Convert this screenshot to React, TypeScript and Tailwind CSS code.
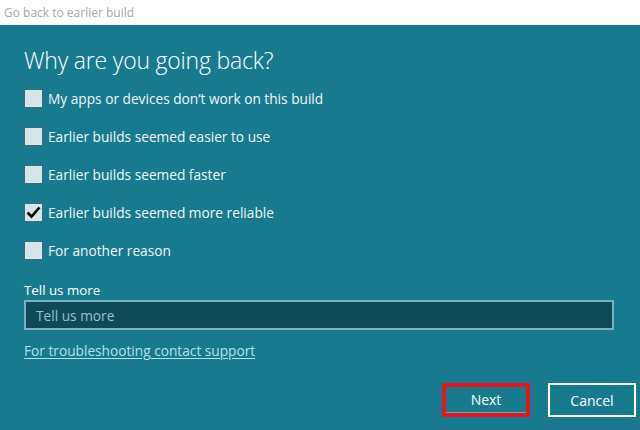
import { useState } from "react";

const reasons = [
  "My apps or devices don\u2019t work on this build",
  "Earlier builds seemed easier to use",
  "Earlier builds seemed faster",
  "Earlier builds seemed more reliable",
  "For another reason",
];

function Checkbox({ checked, onClick }: { checked: boolean; onClick: () => void }) {
  return (
    <button
      onClick={onClick}
      className="w-[19px] h-[19px] shrink-0 border border-[#3d6b76] bg-[#d5e5e9] flex items-center justify-center">
      {checked && (
        <svg width="15" height="13" viewBox="0 0 15 13" fill="none">
          <path d="M1.5 6.5 L5.5 10.5 L13.5 1.5" stroke="#000" strokeWidth="2.6" />
        </svg>
      )}
    </button>
  );
}

export default function App() {
  const [checked, setChecked] = useState<boolean[]>([false, false, false, true, false]);

  const toggle = (i: number) =>
    setChecked((prev) => prev.map((c, idx) => (idx === i ? !c : c)));

  return (
    <div
      className="w-[640px] h-[430px] flex flex-col overflow-hidden"
      style={{ fontFamily: '"Open Sans", "Noto Sans", sans-serif' }}>
      {/* Title bar */}
      <div className="h-[25px] shrink-0 bg-white flex items-center px-[4px] text-[12px] text-[#a8a8a8]">
        Go back to earlier build
      </div>

      {/* Content */}
      <div className="flex-1 bg-[#187a8f] px-6 pt-[20px] flex flex-col text-white">
        <h1 className="text-[23px] font-light leading-[30px] tracking-[-0.2px]">
          Why are you going back?
        </h1>

        <div className="mt-[14px] flex flex-col gap-[19px]">
          {reasons.map((r, i) => (
            <label key={r} className="flex items-center gap-[5px] h-[19px] leading-[19px] text-[13.7px]">
              <Checkbox checked={checked[i]} onClick={() => toggle(i)} />
              <span className="text-[#f2f7f8]">{r}</span>
            </label>
          ))}
        </div>

        <div className="mt-[21px] text-[13.3px] leading-[18px]">Tell us more</div>
        <input
          type="text"
          placeholder="Tell us more"
          className="mt-[1px] w-[590px] h-[30px] bg-[#0f4a58] border-2 border-[#78b2bf] px-[10px] text-[13.7px] text-white placeholder:text-[#9cc0c7] outline-none"
        />

        <a href="#" className="mt-[11px] text-[13.7px] text-[#b3e0ea] underline underline-offset-2 w-fit">
          For troubleshooting contact support
        </a>

        <div className="mt-auto mb-[13px] -mr-[20px] flex justify-end gap-[18px]">
          <button className="w-[88px] h-[34px] border-[4px] border-[#e8141e] text-[14px] flex items-center justify-center">
            <span className="w-full h-full flex items-center justify-center border-b border-[#5fa7b5]">Next</span>
          </button>
          <button className="w-[88px] h-[34px] border-2 border-white text-[14px] flex items-center justify-center">
            Cancel
          </button>
        </div>
      </div>
    </div>
  );
}
